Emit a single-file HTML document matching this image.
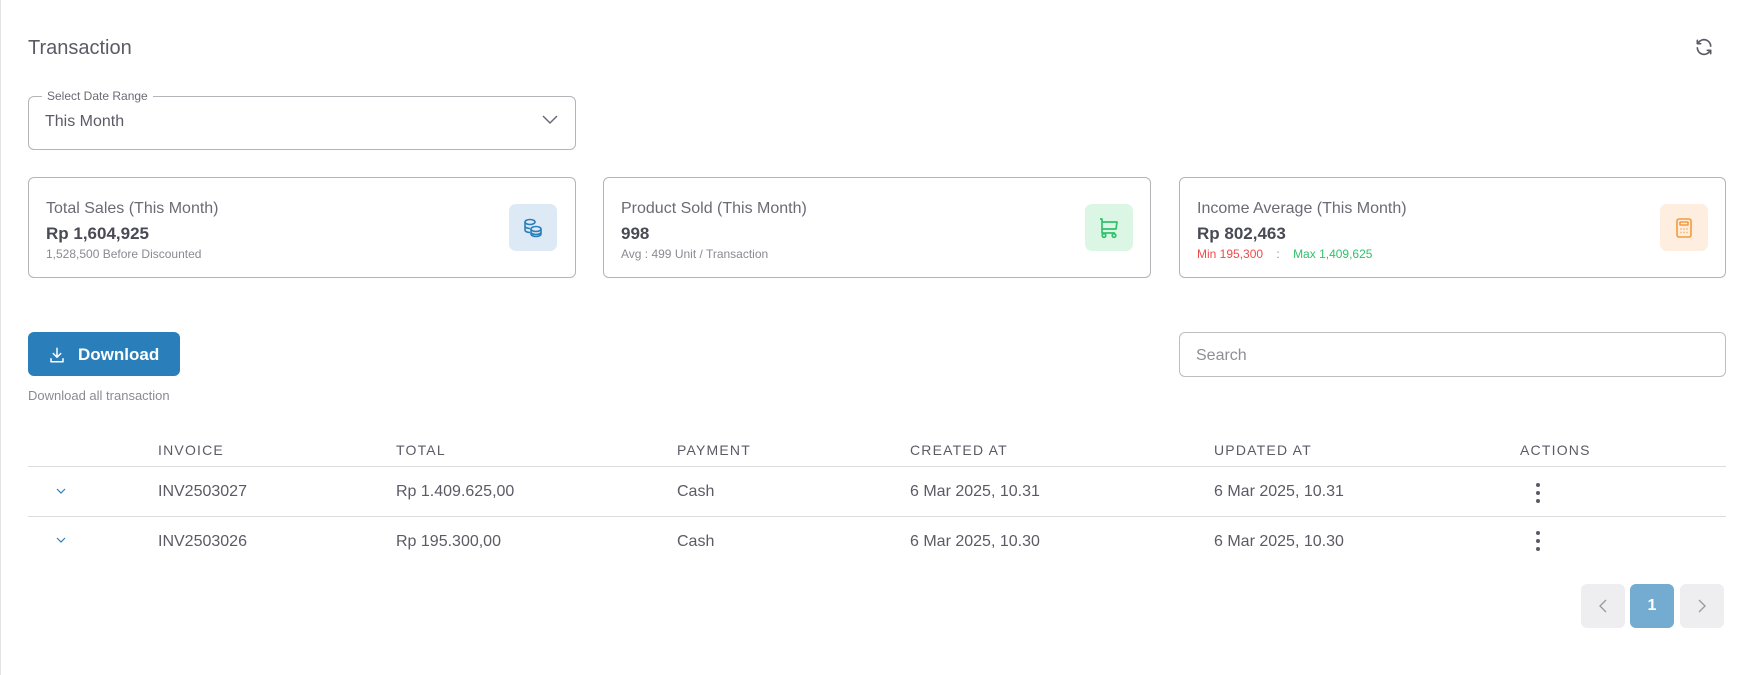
<!DOCTYPE html>
<html><head><meta charset="utf-8"><style>
*{box-sizing:border-box;margin:0;padding:0}
body{width:1748px;height:675px;background:#fff;font-family:"Liberation Sans",sans-serif;color:#5b5b66;position:relative;overflow:hidden}
.a{position:absolute}
.box{position:absolute;border:1px solid #b5b5b9;border-radius:6px;background:#fff}
.title{font-size:20px;color:#5b5b66}
.ct{font-size:16px;color:#6b6b75}
.cv{font-size:17px;font-weight:bold;color:#4a4a55}
.cs{font-size:12px;color:#8a8a92}
.ib{position:absolute;width:48px;height:47px;border-radius:7px;display:flex;align-items:center;justify-content:center}
.th{font-size:14px;letter-spacing:1.2px;color:#5b5b66}
.td{font-size:16px;color:#5b5b66}
.pg{position:absolute;top:584px;width:44px;height:44px;border-radius:6px;background:#eeeef0;display:flex;align-items:center;justify-content:center}
</style></head><body>
<div class="a" style="left:0;top:0;width:1px;height:675px;background:#e3e3e6"></div>
<div class="a title" style="left:28px;top:37px">Transaction</div>
<svg class="a" style="left:1694px;top:37px" width="20" height="20" viewBox="0 0 24 24" fill="none" stroke="#5b5b66" stroke-width="2" stroke-linecap="round" stroke-linejoin="round"><path d="M20 11A8 8 0 0 0 5.5 6.5L4 8M4 4v4h4M4 13a8 8 0 0 0 14.5 4.5L20 16M20 20v-4h-4"/></svg>

<div class="box" style="left:28px;top:96px;width:548px;height:54px"></div>
<div class="a" style="left:42px;top:89px;background:#fff;padding:0 5px;font-size:12px;color:#6b6b75">Select Date Range</div>
<div class="a" style="left:45px;top:113px;font-size:16px;color:#5b5b66">This Month</div>
<svg class="a" style="left:541px;top:114px" width="18" height="12" viewBox="0 0 18 12" fill="none" stroke="#6b6b75" stroke-width="1.5"><path d="M2 2l7 7 7-7"/></svg>

<div class="box" style="left:28px;top:177px;width:548px;height:101px"></div>
<div class="a ct" style="left:46px;top:200px">Total Sales (This Month)</div>
<div class="a cv" style="left:46px;top:224px">Rp 1,604,925</div>
<div class="a cs" style="left:46px;top:247px">1,528,500 Before Discounted</div>
<div class="ib" style="left:509px;top:204px;background:#dde9f4"><svg width="24" height="24" viewBox="0 0 24 24" fill="none" stroke="#2a7fba" stroke-width="1.6"><ellipse cx="9" cy="6" rx="5" ry="2.5"/><path d="M4 6v8c0 1.4 2.2 2.5 5 2.5M4 10c0 1.4 2.2 2.5 5 2.5"/><ellipse cx="15" cy="13" rx="5" ry="2.5"/><path d="M10 13v5c0 1.4 2.2 2.5 5 2.5s5-1.1 5-2.5v-5M10 16c0 1.4 2.2 2.5 5 2.5s5-1.1 5-2.5"/></svg></div>

<div class="box" style="left:603px;top:177px;width:548px;height:101px"></div>
<div class="a ct" style="left:621px;top:200px">Product Sold (This Month)</div>
<div class="a cv" style="left:621px;top:224px">998</div>
<div class="a cs" style="left:621px;top:247px">Avg : 499 Unit / Transaction</div>
<div class="ib" style="left:1085px;top:204px;background:#dcf6e6"><svg width="24" height="24" viewBox="0 0 24 24" fill="none" stroke="#2fc26a" stroke-width="1.7" stroke-linejoin="round"><path d="M3 3h2v14h13M5 6h15l-1 7H5"/><circle cx="7" cy="19.5" r="1.8"/><circle cx="17" cy="19.5" r="1.8"/></svg></div>

<div class="box" style="left:1179px;top:177px;width:547px;height:101px"></div>
<div class="a ct" style="left:1197px;top:200px">Income Average (This Month)</div>
<div class="a cv" style="left:1197px;top:224px">Rp 802,463</div>
<div class="a cs" style="left:1197px;top:247px"><span style="color:#ef4b4b">Min 195,300</span>&nbsp;&nbsp;&nbsp;&nbsp;:&nbsp;&nbsp;&nbsp;&nbsp;<span style="color:#2fc26a">Max 1,409,625</span></div>
<div class="ib" style="left:1660px;top:204px;background:#fdeedf"><svg width="24" height="24" viewBox="0 0 24 24" fill="none" stroke="#f59a3d" stroke-width="1.6"><rect x="5" y="3" width="14" height="18" rx="2"/><rect x="8" y="6" width="8" height="3" rx="0.5"/><path d="M8.5 13h1M11.5 13h1M14.5 13h1M8.5 16.5h1M11.5 16.5h1M14.5 16.5h1"/></svg></div>

<div class="a" style="left:28px;top:332px;width:152px;height:44px;background:#2a7fba;border-radius:6px;color:#fff;font-weight:bold;font-size:17px;display:flex;align-items:center;padding-left:20px;padding-top:2px">
<svg width="18" height="18" viewBox="0 0 24 24" fill="none" stroke="#fff" stroke-width="2" stroke-linecap="round" stroke-linejoin="round" style="margin-right:12px"><path d="M12 3v12M7 10l5 5 5-5M4 17v4h16v-4"/></svg>Download</div>
<div class="a" style="left:28px;top:388px;font-size:13px;color:#8a8a92">Download all transaction</div>

<div class="box" style="left:1179px;top:332px;width:547px;height:45px;border-color:#bdbdc2"></div>
<div class="a" style="left:1196px;top:347px;font-size:16px;color:#8e8e96">Search</div>

<div class="a th" style="left:158px;top:442px">INVOICE</div>
<div class="a th" style="left:396px;top:442px">TOTAL</div>
<div class="a th" style="left:677px;top:442px">PAYMENT</div>
<div class="a th" style="left:910px;top:442px">CREATED AT</div>
<div class="a th" style="left:1214px;top:442px">UPDATED AT</div>
<div class="a th" style="left:1520px;top:442px">ACTIONS</div>
<div class="a" style="left:28px;top:466px;width:1698px;height:1px;background:#dcdcdf"></div>
<div class="a" style="left:28px;top:516px;width:1698px;height:1px;background:#dcdcdf"></div>

<svg class="a" style="left:56px;top:488px" width="10" height="7" viewBox="0 0 10 7" fill="none" stroke="#2a7fba" stroke-width="1.2"><path d="M1 1l4 4 4-4"/></svg>
<div class="a td" style="left:158px;top:483px">INV2503027</div>
<div class="a td" style="left:396px;top:483px">Rp 1.409.625,00</div>
<div class="a td" style="left:677px;top:483px">Cash</div>
<div class="a td" style="left:910px;top:483px">6 Mar 2025, 10.31</div>
<div class="a td" style="left:1214px;top:483px">6 Mar 2025, 10.31</div>
<svg class="a" style="left:1535px;top:482px" width="6" height="22" viewBox="0 0 6 22" fill="#5b5b66"><circle cx="3" cy="3" r="2"/><circle cx="3" cy="11" r="2"/><circle cx="3" cy="19" r="2"/></svg>

<svg class="a" style="left:56px;top:537px" width="10" height="7" viewBox="0 0 10 7" fill="none" stroke="#2a7fba" stroke-width="1.2"><path d="M1 1l4 4 4-4"/></svg>
<div class="a td" style="left:158px;top:533px">INV2503026</div>
<div class="a td" style="left:396px;top:533px">Rp 195.300,00</div>
<div class="a td" style="left:677px;top:533px">Cash</div>
<div class="a td" style="left:910px;top:533px">6 Mar 2025, 10.30</div>
<div class="a td" style="left:1214px;top:533px">6 Mar 2025, 10.30</div>
<svg class="a" style="left:1535px;top:530px" width="6" height="22" viewBox="0 0 6 22" fill="#5b5b66"><circle cx="3" cy="3" r="2"/><circle cx="3" cy="11" r="2"/><circle cx="3" cy="19" r="2"/></svg>

<div class="pg" style="left:1581px"><svg width="10" height="16" viewBox="0 0 10 16" fill="none" stroke="#9a9aa2" stroke-width="1.4"><path d="M8 2L2 8l6 6"/></svg></div>
<div class="pg" style="left:1630px;background:#74abd1;color:#fff;font-weight:bold;font-size:16px">1</div>
<div class="pg" style="left:1680px"><svg width="10" height="16" viewBox="0 0 10 16" fill="none" stroke="#9a9aa2" stroke-width="1.4"><path d="M2 2l6 6-6 6"/></svg></div>
</body></html>
